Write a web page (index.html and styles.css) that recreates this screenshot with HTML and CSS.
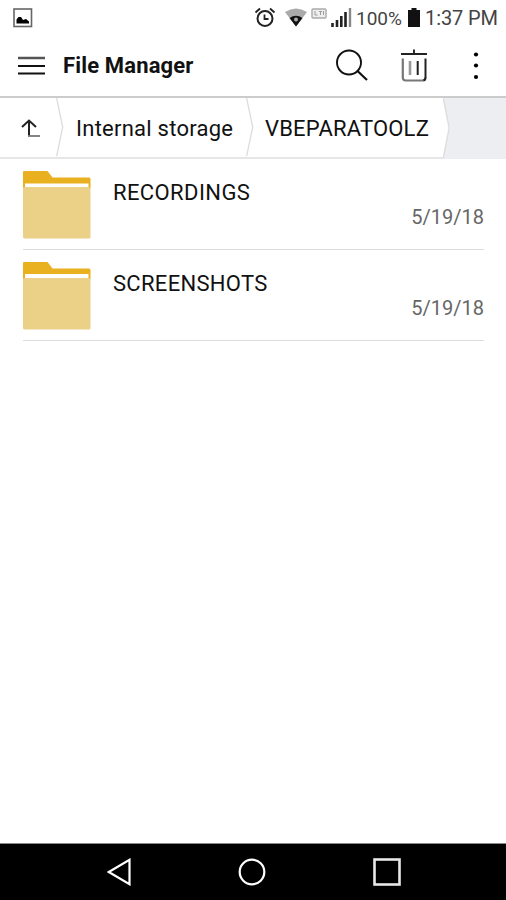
FILE: index.html
```html
<!DOCTYPE html>
<html lang="en">

<head>
    <meta charset="UTF-8">
    <meta name="viewport" content="width=device-width, initial-scale=1.0">
    <title>File Manager</title>
    <link rel="stylesheet" href="styles.css">
</head>

<body>

    <div class="statusbar">
        <svg class="icon-picture" width="20" height="20" viewBox="0 0 20 20">
            <rect x="1" y="1" width="17.5" height="17.5" fill="#fff" stroke="#666" stroke-width="1.6"/>
            <path d="M3.500 15.500v-4l2-2.500 2.500 0 2 3 3-1 3 2.500v2z" fill="#000"/>
        </svg>
        <svg class="icon-alarm" width="22" height="22" viewBox="0 0 22 22">
            <circle cx="11" cy="12.500" r="7.500" fill="none" stroke="#222" stroke-width="2"/>
            <path d="M1.500 6.500l4.500-4M20.500 6.500L16 2.500M10.500 8.500v4.500H14.500" fill="none" stroke="#222" stroke-width="1.8"/>
        </svg>
        <svg class="icon-wifi" width="24" height="20" viewBox="0 0 24 20">
            <path d="M1 4Q12-3 23 4L12 18.500z" fill="#aaa"/>
            <path d="M5.500 10Q12 5.500 18.500 10L12 18.500z" fill="#111"/>
            <circle cx="12" cy="11.500" r="2" fill="#aaa"/>
        </svg>
        <svg class="icon-lte" width="16" height="11" viewBox="0 0 16 11">
            <rect x="1" y="1" width="14" height="9" rx="1" fill="#eee" stroke="#aaa" stroke-width="1.400"/>
            <path d="M4 3v4h2.500M8 3.500h3M9.500 3.500V7M12.500 3v4" fill="none" stroke="#999" stroke-width="1"/>
        </svg>
        <svg class="icon-signal" width="21" height="20" viewBox="0 0 21 20">
            <path d="M1.500 15v4M6 12v7M10.300 8v11M14.500 4v15" stroke="#222" stroke-width="2.600"/>
            <path d="M19 0v19" stroke="#888" stroke-width="2.400"/>
        </svg>
        <span class="percent">100%</span>
        <svg class="icon-battery" width="12" height="20" viewBox="0 0 12 20">
            <path d="M3.500 0h5v2H12V19H0V2h3.500z" fill="#111"/>
        </svg>
        <span class="clock">1:37 PM</span>
    </div>

    <div class="header">
        <svg class="icon-menu" width="27" height="20" viewBox="0 0 27 20">
            <path d="M0 2h27" stroke="#555" stroke-width="2.500"/>
            <path d="M0 10h27M0 17.500h27" stroke="#111" stroke-width="2"/>
        </svg>
        <h1>File Manager</h1>
        <svg class="icon-search" width="34" height="34" viewBox="0 0 34 34">
            <circle cx="14" cy="13.500" r="12" fill="none" stroke="#111" stroke-width="1.900"/>
            <path d="M22.500 22l9.500 9" stroke="#111" stroke-width="2.200"/>
        </svg>
        <svg class="icon-trash" width="28" height="34" viewBox="0 0 28 34">
            <path d="M1 5h26M14 0.500v4.500" stroke="#222" stroke-width="1.900"/>
            <path d="M2.800 9.500v19q0 3 3 3h16.500q3 0 3-3" fill="none" stroke="#777" stroke-width="2.200"/>
            <path d="M25.500 9.500v19q0 2.500-2 3M17.700 12v14" fill="none" stroke="#222" stroke-width="2"/>
            <path d="M10 12v14" stroke="#999" stroke-width="2.600"/>
        </svg>
        <svg class="icon-more" width="6" height="28" viewBox="0 0 6 28">
            <circle cx="3" cy="2.500" r="2.100"/>
            <circle cx="3" cy="13.500" r="2.100"/>
            <circle cx="3" cy="25" r="2.100"/>
        </svg>
    </div>

    <div class="breadcrumb">
        <div class="crumb crumb-up">
            <svg width="20" height="19" viewBox="0 0 20 19">
                <path d="M1 8l7-6.500L15 8M8 2v15" fill="none" stroke="#222" stroke-width="2"/>
                <path d="M7 17h12" stroke="#777" stroke-width="1.800"/>
            </svg>
        </div>
        <svg class="arrow" width="8" height="61" viewBox="0 0 8 61">
            <path d="M0.500 0L6.800 30 0.500 60" fill="none" stroke="#ddd" stroke-width="1.400"/>
        </svg>
        <div class="crumb crumb-root">Internal storage</div>
        <svg class="arrow" width="8" height="61" viewBox="0 0 8 61">
            <path d="M0.500 0L6.800 30 0.500 60" fill="none" stroke="#ddd" stroke-width="1.400"/>
        </svg>
        <div class="crumb crumb-current">VBEPARATOOLZ</div>
        <svg class="arrow-last" width="8" height="61" viewBox="0 0 8 61">
            <path d="M0 0L6.500 30 0 61z" fill="#fff"/>
            <path d="M0.200 0L6.200 30 0.200 60" fill="none" stroke="#ddd" stroke-width="1.400"/>
        </svg>
    </div>

    <div class="files">
        <div class="file">
            <svg class="folder" width="68" height="68" viewBox="0 0 68 68">
                <path d="M0 1q0-1 1-1h23.500l5 6.500h36.500q1.500 0 1.500 1.500v9H0z" fill="#e9b020"/>
                <rect x="2" y="12.500" width="63.500" height="4" fill="#fff"/>
                <path d="M0 16.200h67.500v49.800q0 1.500-1.500 1.500H1.500Q0 67.500 0 66z" fill="#ebd088"/>
            </svg>
            <div class="name name-rec">RECORDINGS</div>
            <div class="date">5/19/18</div>
        </div>
        <div class="file">
            <svg class="folder" width="68" height="68" viewBox="0 0 68 68">
                <path d="M0 1q0-1 1-1h23.500l5 6.500h36.500q1.500 0 1.500 1.500v9H0z" fill="#e9b020"/>
                <rect x="2" y="12" width="63.500" height="4.500" fill="#fff"/>
                <path d="M0 16.200h67.500v49.800q0 1.500-1.500 1.500H1.500Q0 67.500 0 66z" fill="#ebd088"/>
            </svg>
            <div class="name name-scr">SCREENSHOTS</div>
            <div class="date">5/19/18</div>
        </div>
    </div>

    <div class="navbar">
        <svg width="24" height="28" viewBox="0 0 24 28">
            <path d="M22.500 1.800v24.400L1.800 14z" fill="none" stroke="#fff" stroke-width="2.200"/>
        </svg>
        <svg width="28" height="28" viewBox="0 0 28 28">
            <circle cx="14" cy="14" r="12.300" fill="none" stroke="#fff" stroke-width="2.200"/>
        </svg>
        <svg width="28" height="28" viewBox="0 0 28 28">
            <rect x="1.500" y="1.500" width="25" height="25" fill="none" stroke="#e8e8e8" stroke-width="2.600"/>
        </svg>
    </div>

</body>

</html>
```
FILE: styles.css
```css
* {
    box-sizing: border-box;
}

body {
    margin: 0;
    height: 900px;
    display: flex;
    flex-direction: column;
    background-color: #fff;
    font-family: Roboto, "Liberation Sans", sans-serif;
    color: #111;
    overflow: hidden;
}

svg {
    display: block;
    flex: none;
}

.statusbar {
    height: 36px;
    display: flex;
    align-items: flex-start;
    padding: 8px 0 0 13px;
    font-size: 20px;
    line-height: 21px;
    color: #444;
    white-space: nowrap;
}

.icon-alarm {
    margin-left: 221px;
    margin-top: -2px;
}

.icon-wifi {
    margin-left: 8px;
}

.icon-lte {
    margin-left: 3px;
}

.icon-signal {
    margin-left: 4px;
}

.percent {
    width: 46px;
    margin-left: 4px;
    font-size: 19px;
}

.icon-battery {
    margin-left: 6px;
}

.clock {
    margin-left: 5px;
    letter-spacing: -0.1px;
}

.header {
    height: 62px;
    display: flex;
    align-items: center;
    padding: 0 0 1px 18px;
    border-bottom: 2px solid #ccc;
}

h1 {
    width: 272px;
    margin: 0 0 0 18px;
    font-size: 22px;
    font-weight: bold;
    letter-spacing: 0.15px;
}

.icon-trash {
    margin-left: 31px;
}

.icon-more {
    margin-left: 45px;
}

.breadcrumb {
    height: 61px;
    display: flex;
    background-color: #eceef2;
    font-size: 22px;
    line-height: 61px;
    white-space: nowrap;
}

.crumb,
.arrow {
    background-color: #fff;
    border-bottom: 2px solid #e6e6e6;
}

.crumb-up {
    width: 56px;
    padding: 21px 0 0 21px;
}

.crumb-root {
    width: 182px;
    padding-left: 12px;
    letter-spacing: 0.25px;
}

.crumb-current {
    width: 189px;
    padding-left: 11px;
    letter-spacing: 0.2px;
}

.files {
    flex: 1;
    padding: 0 22px 0 23px;
}

.file {
    height: 91px;
    display: flex;
    padding-top: 12px;
    border-bottom: 1px solid #ddd;
}

.name {
    flex: 1;
    margin-left: 22px;
    padding-top: 8px;
    font-size: 22px;
    line-height: 28px;
}

.name-rec {
    letter-spacing: 0.4px;
}

.name-scr {
    letter-spacing: 0.3px;
}

.date {
    padding-top: 33px;
    font-size: 20px;
    line-height: 26px;
    color: #666;
}

.navbar {
    height: 57px;
    display: flex;
    align-items: center;
    padding-left: 107px;
    gap: 107px;
    background-color: #000;
    border-top: 1px solid #888;
}
```
